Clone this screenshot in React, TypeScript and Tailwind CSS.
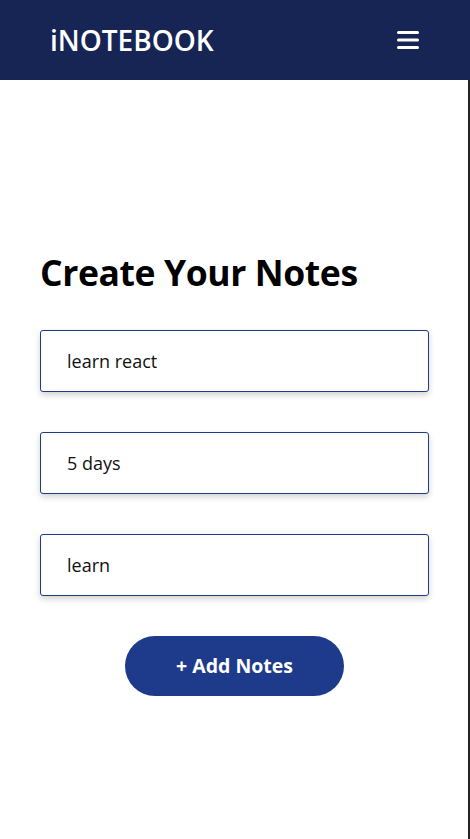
import { useState } from "react";

function MenuIcon() {
  return (
    <svg width="24" height="20" viewBox="0 0 24 20" fill="none">
      <path d="M2.5 2.5h19M2.5 10h19M2.5 17.5h19" stroke="white" strokeWidth="3" strokeLinecap="round" />
    </svg>
  );
}

export default function App() {
  const [title, setTitle] = useState("learn react");
  const [desc, setDesc] = useState("5 days");
  const [tag, setTag] = useState("learn");

  const inputClass =
    "w-[389px] h-[62px] px-[26px] border border-[#1e3a8a] rounded-[3px] bg-white text-[18px] text-[#111] shadow-[0_3px_6px_rgba(0,0,0,0.18)] outline-none";

  return (
    <div className="min-h-screen bg-white font-['Open_Sans',sans-serif]">
      <header className="h-[80px] bg-[#172554] flex items-center justify-between pl-[50px] pr-[50px]">
        <span className="text-white text-[28px] font-semibold">iNOTEBOOK</span>
        <button className="flex items-center">
          <MenuIcon />
        </button>
      </header>
      <main className="min-h-[759px] border-r-2 border-[#222] pl-[40px] pt-[171px]">
        <h1 className="text-[35.5px] font-bold text-black leading-[1.2] tracking-[-0.4px]">Create Your Notes</h1>
        <form
          className="flex flex-col gap-[40px] mt-[36px] w-[389px]"
          onSubmit={(e) => e.preventDefault()}
        >
          <input className={inputClass} value={title} onChange={(e) => setTitle(e.target.value)} />
          <input className={inputClass} value={desc} onChange={(e) => setDesc(e.target.value)} />
          <input className={inputClass} value={tag} onChange={(e) => setTag(e.target.value)} />
          <div className="flex justify-center">
            <button
              type="submit"
              className="w-[219px] h-[60px] rounded-full bg-[#1e3a8a] text-white text-[19.5px] font-bold"
            >
              + Add Notes
            </button>
          </div>
        </form>
      </main>
    </div>
  );
}
